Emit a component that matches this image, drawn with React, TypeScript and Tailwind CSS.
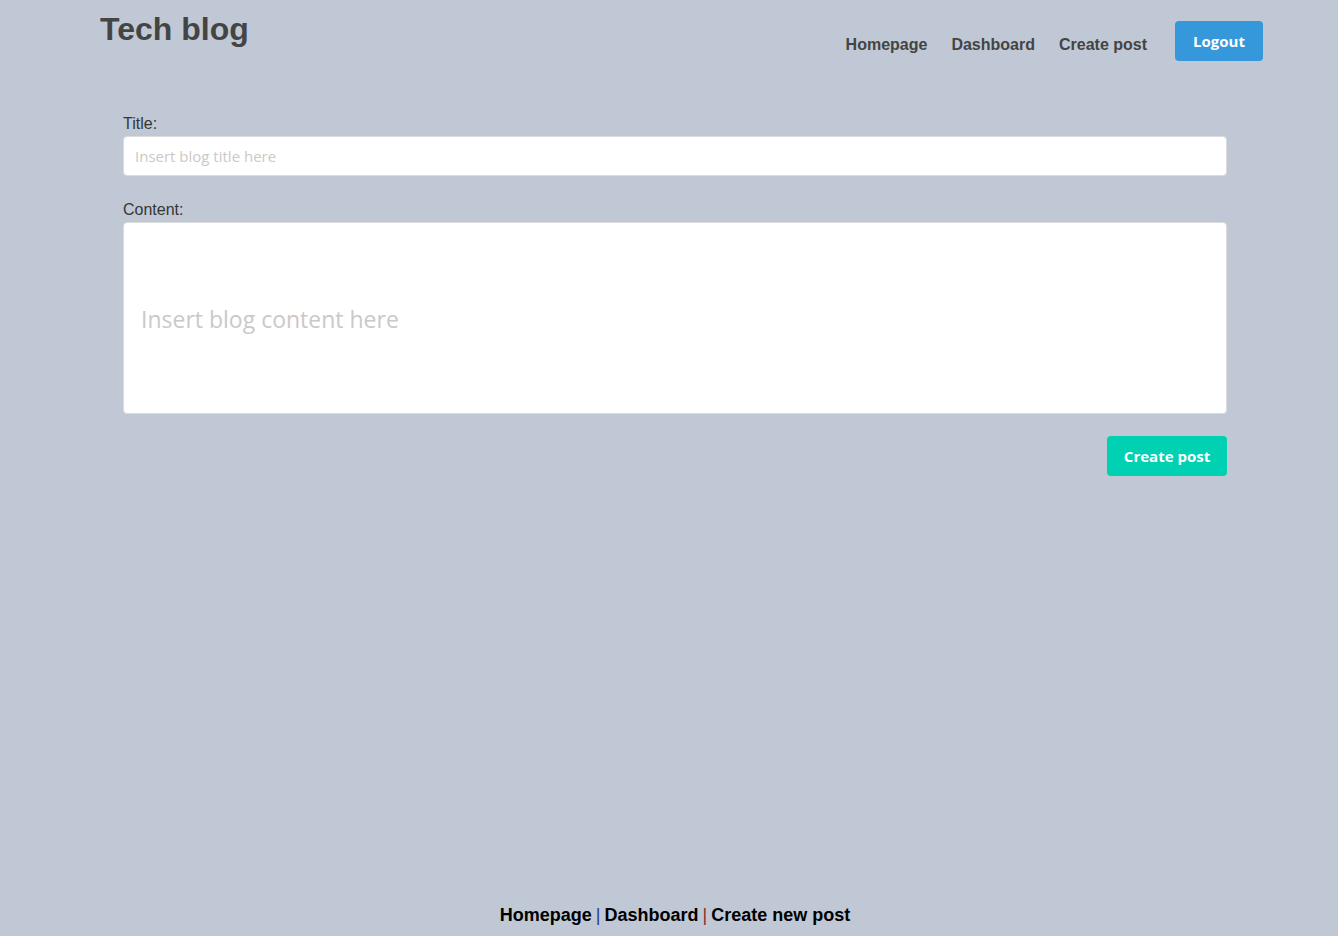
export default function App() {
  return (
    <div className="min-h-screen flex flex-col bg-[#bfc8d4] font-['Liberation_Sans',Arial,sans-serif]">
      <header className="flex items-start justify-between pl-[100px] pr-[75px]">
        <h1 className="mt-[10px] text-[32px] leading-[38px] font-bold text-[#444]">Tech blog</h1>
        <nav className="flex items-center mt-[21px]">
          <a className="mt-[7px] text-[16px] font-bold text-[#444]">Homepage</a>
          <a className="mt-[7px] ml-[24px] text-[16px] font-bold text-[#444]">Dashboard</a>
          <a className="mt-[7px] ml-[24px] text-[16px] font-bold text-[#444]">Create post</a>
          <button className="ml-[28px] h-[40px] w-[88px] rounded-[4px] bg-[#3498db] text-white text-[15px] font-bold font-['Open_Sans',sans-serif]">
            Logout
          </button>
        </nav>
      </header>

      <main className="flex-1">
        <form className="ml-[123px] w-[1104px] mt-[52px]" onSubmit={(e) => e.preventDefault()}>
          <label className="block text-[16px] leading-[22px] text-[#363636]">Title:</label>
          <input
            type="text"
            placeholder="Insert blog title here"
            className="mt-[1px] block w-full h-[40px] px-[11px] rounded-[4px] border border-[#dbdbdb] bg-white text-[15px] font-['Open_Sans',sans-serif] placeholder:text-[#cbc9c7] outline-none"
          />
          <label className="block mt-[23px] text-[16px] leading-[22px] text-[#363636]">Content:</label>
          <textarea
            placeholder="Insert blog content here"
            className="mt-[1px] block w-full h-[192px] pt-[78px] px-[17px] rounded-[4px] border border-[#dbdbdb] bg-white text-[23px] leading-[36px] font-['Open_Sans',sans-serif] placeholder:text-[#cbc9c7] resize-none outline-none"
          />
          <div className="flex justify-end mt-[22px]">
            <button className="h-[40px] w-[120px] rounded-[4px] bg-[#00d1b2] text-white text-[15px] font-bold font-['Open_Sans',sans-serif]">
              Create post
            </button>
          </div>
        </form>
      </main>

      <footer className="flex justify-center pl-[12px] pb-[10px] text-[18px] leading-[22px] font-bold text-black">
        <a>Homepage</a>
        <span className="mx-[4px] font-normal text-[#2c3a8c]">|</span>
        <a>Dashboard</a>
        <span className="mx-[4px] font-normal text-[#8c2c2c]">|</span>
        <a>Create new post</a>
      </footer>
    </div>
  );
}
